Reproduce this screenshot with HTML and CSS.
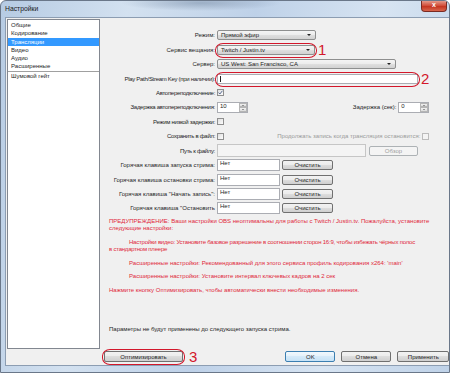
FILE: index.html
```html
<!DOCTYPE html>
<html lang="ru">
<head>
  <meta charset="UTF-8" />
  <meta name="viewport" content="width=device-width, initial-scale=1.0"/>
  <title>Настройки</title>
  <link rel="stylesheet" href="styles.css">
</head>
<body>

<div class="window">
  <div class="titlebar">
    <span class="title">Настройки</span>
    <div class="close">x</div>
  </div>

  <div class="frame">
    <div class="client">

      <!-- left category list -->
      <ul class="list">
        <li>Общие</li>
        <li>Кодирование</li>
        <li class="selected">Трансляции</li>
        <li>Видео</li>
        <li>Аудио</li>
        <li>Расширенные</li>
        <li class="sep">Шумовой гейт</li>
      </ul>

      <div class="main">
        <div class="form">
          <div class="row">
            <label>Режим:</label>
            <div class="select w-mode">Прямой эфир</div>
          </div>
          <div class="row">
            <label>Сервис вещания:</label>
            <div class="marked">
              <div class="select w-service">Twitch / Justin.tv</div>
              <span class="ring"></span>
            </div>
            <span class="num">1</span>
          </div>
          <div class="row">
            <label>Сервер:</label>
            <div class="select w-server">US West: San Francisco, CA</div>
          </div>
          <div class="row">
            <label class="tight">Play Path/Stream Key (при наличии):</label>
            <div class="marked">
              <div class="input w-key"><span class="caret"></span></div>
              <span class="ring"></span>
            </div>
            <span class="num">2</span>
          </div>
          <div class="row">
            <label class="tight">Автопереподключение:</label>
            <span class="check checked">
              <svg width="5" height="5" viewBox="0 0 5 5"><path d="M0.6 2.6 L1.9 4 L4.4 0.8" fill="none" stroke="#4a5f8a" stroke-width="0.9"/></svg>
            </span>
          </div>
          <div class="row">
            <label class="tight">Задержка автопереподключения:</label>
            <div class="spin"><span class="spin-val">10</span><span class="spin-btns"><i class="up"></i><i class="down"></i></span></div>
            <div class="right">
              <label class="sub">Задержка (сек):</label>
              <div class="spin"><span class="spin-val">0</span><span class="spin-btns"><i class="up"></i><i class="down"></i></span></div>
            </div>
          </div>
          <div class="row">
            <label class="tight">Режим низкой задержки:</label>
            <span class="check"></span>
          </div>
          <div class="row">
            <label class="tight">Сохранить в файл:</label>
            <span class="check"></span>
            <div class="right">
              <label class="sub disabled">Продолжать запись когда трансляция остановится:</label>
              <span class="check off"></span>
            </div>
          </div>
          <div class="row">
            <label class="tight">Путь к файлу:</label>
            <div class="input w-path off"></div>
            <button class="btn w-browse off">Обзор</button>
          </div>
          <div class="row">
            <label>Горячая клавиша запуска стрима:</label>
            <div class="input hotkey">Нет</div>
            <button class="btn w-clear">Очистить</button>
          </div>
          <div class="row">
            <label>Горячая клавиша остановки стрима:</label>
            <div class="input hotkey">Нет</div>
            <button class="btn w-clear">Очистить</button>
          </div>
          <div class="row">
            <label>Горячая клавиша "Начать запись":</label>
            <div class="input hotkey">Нет</div>
            <button class="btn w-clear">Очистить</button>
          </div>
          <div class="row">
            <label>Горячая клавиша "Остановить</label>
            <div class="input hotkey">Нет</div>
            <button class="btn w-clear">Очистить</button>
          </div>
        </div>

        <div class="notes">
          <p>ПРЕДУПРЕЖДЕНИЕ: Ваши настройки OBS неоптимальны для работы с Twitch / Justin.tv. Пожалуйста, установите<br>следующие настройки:</p>
          <p class="indent condensed">Настройки видео: Установите базовое разрешение в соотношении сторон 16:9, чтобы избежать чёрных полос<br>в стандартном плеере</p>
          <p class="indent">Расширенные настройки: Рекомендованный для этого сервиса профиль кодирования x264: 'main'</p>
          <p class="indent">Расширенные настройки: Установите интервал ключевых кадров на 2 сек</p>
          <p>Нажмите кнопку Оптимизировать, чтобы автоматически внести необходимые изменения.</p>
        </div>

        <div class="apply-note">Параметры не будут применены до следующего запуска стрима.</div>

        <div class="footer">
          <div class="marked">
            <button class="btn w-opt">Оптимизировать</button>
            <span class="ring"></span>
          </div>
          <span class="num">3</span>
          <div class="actions">
            <button class="btn default">OK</button>
            <button class="btn">Отмена</button>
            <button class="btn w-apply">Применить</button>
          </div>
        </div>
      </div>

    </div>
  </div>
</div>

</body>
</html>
```

FILE: styles.css
```css
body {
  margin: 0;
  font-family: "Liberation Sans", Arial, sans-serif;
  font-size: 6px;
  color: #1e1e1e;
  background: #fff;
}

.window {
  width: 450px;
  height: 373px;
  box-sizing: border-box;
  border: 1px solid #6a7789;
  border-radius: 6px 6px 0 0;
  background:
    radial-gradient(ellipse 80px 8px at 200px 2px, rgba(120,140,165,0.55), rgba(120,140,165,0) 100%),
    linear-gradient(100deg, #b6cbe3 0%, #d3e1f0 25%, #bed1e8 50%, #d7e4f2 75%, #bfd2e8 100%);
  display: flex;
  flex-direction: column;
  overflow: hidden;
}

.titlebar {
  height: 16px;
  display: flex;
  align-items: flex-start;
}
.title {
  padding: 4px 0 0 4px;
  font-size: 6.8px;
  color: #1a1a1a;
}
.close {
  margin: -1px 2px 0 auto;
  width: 26px;
  height: 12px;
  box-sizing: border-box;
  border: 1px solid #7a2a22;
  border-top: none;
  border-radius: 0 0 4px 4px;
  background: linear-gradient(#e9a99b, #d2503c 50%, #c22e1a 51%, #d8654c);
  color: #fff;
  font-size: 7px;
  font-weight: bold;
  text-align: center;
  line-height: 10px;
}

.frame {
  flex: 1;
  padding: 0 4px 6px 4px;
  display: flex;
}
.client {
  flex: 1;
  display: flex;
  background: #f0f0f0;
  border: 1px solid #8c9db2;
}

/* category list */
.list {
  list-style: none;
  margin: 1px 0 0 1px;
  padding: 1px 0 0 0;
  width: 93px;
  height: 330px;
  box-sizing: border-box;
  background: #fff;
  border: 1px solid #828790;
}
.list li {
  height: 8.3px;
  line-height: 8.3px;
  padding-left: 3px;
}
.list li.selected {
  background: #3399ff;
  color: #fff;
}
.list li.sep {
  border-top: 1px solid #a0a0a0;
}

.main {
  flex: 1;
  min-width: 0;
  display: flex;
  flex-direction: column;
}

.form {
  padding-top: 10px;
}
.row {
  height: 14.45px;
  display: flex;
  align-items: center;
  padding-right: 25px;
}
.row > label {
  width: 115px;
  flex-shrink: 0;
  text-align: right;
  white-space: nowrap;
  margin-right: 2px;
}
.row > label.tight {
  letter-spacing: -0.3px;
}
.row .right {
  margin-left: auto;
  display: flex;
  align-items: center;
}
.sub {
  margin-right: 2px;
  white-space: nowrap;
}
.disabled {
  color: #9a9a9a;
}

.select {
  position: relative;
  height: 10px;
  box-sizing: border-box;
  padding-left: 3px;
  line-height: 8px;
  border: 1px solid #8e8f8f;
  border-radius: 2px;
  background: linear-gradient(#f4f4f4, #ececec 50%, #dfdfdf 50%, #d2d2d2);
  flex-shrink: 0;
}
.select::after {
  content: "";
  position: absolute;
  right: 4px;
  top: 3px;
  border-left: 2px solid transparent;
  border-right: 2px solid transparent;
  border-top: 2px solid #222;
}
.w-mode { width: 99px; }
.w-service { width: 98px; }
.w-server { width: 179px; }

.input {
  height: 10px;
  box-sizing: border-box;
  border: 1px solid #abadb3;
  background: #fff;
  padding-left: 2px;
  line-height: 8px;
  flex-shrink: 0;
}
.input.off {
  background: #f4f4f4;
  border-color: #c6c6c6;
}
.w-key { width: 201px; }
.w-path { width: 149px; height: 13px; }
.caret {
  display: inline-block;
  width: 1px;
  height: 6px;
  background: #222;
  margin-top: 1px;
}
.hotkey {
  width: 63px;
  height: 12px;
  line-height: 7px;
}

.marked {
  position: relative;
  display: flex;
  flex-shrink: 0;
}
.ring {
  position: absolute;
  left: -2px;
  right: -2px;
  top: -2px;
  bottom: -3px;
  border: 1.3px solid #d3172b;
  border-radius: 8px / 7px;
}
.num {
  color: #d3172b;
  font-size: 15px;
  line-height: 12px;
  margin-left: 3px;
  flex-shrink: 0;
}

.check {
  width: 7px;
  height: 7px;
  box-sizing: border-box;
  border: 1px solid #8f8f8f;
  background: linear-gradient(135deg, #dedede, #fdfdfd);
  display: flex;
  align-items: center;
  justify-content: center;
  flex-shrink: 0;
}
.check.off {
  border-color: #bcbcbc;
  background: #f4f4f4;
}

.spin {
  width: 31px;
  height: 11px;
  box-sizing: border-box;
  border: 1px solid #abadb3;
  background: #fff;
  display: flex;
  flex-shrink: 0;
}
.spin-val {
  flex: 1;
  padding-left: 2px;
  line-height: 7px;
}
.spin-btns {
  width: 8px;
  display: flex;
  flex-direction: column;
}
.spin-btns i {
  flex: 1;
  position: relative;
  background: linear-gradient(#f2f2f2, #dcdcdc);
  border: 0.5px solid #b5b5b5;
}
.spin-btns i::after {
  content: "";
  position: absolute;
  left: 2px;
  top: 1px;
  border-left: 1.5px solid transparent;
  border-right: 1.5px solid transparent;
}
.spin-btns .up::after { border-bottom: 1.5px solid #444; }
.spin-btns .down::after { border-top: 1.5px solid #444; }

.btn {
  height: 10px;
  box-sizing: border-box;
  padding: 0;
  font-family: inherit;
  font-size: 6px;
  line-height: 8px;
  color: #1e1e1e;
  border: 1px solid #707070;
  border-radius: 2px;
  background: linear-gradient(#f2f2f2, #ebebeb 50%, #dddddd 50%, #cfcfcf);
  flex-shrink: 0;
}
.btn.off {
  color: #a0a0a0;
  border-color: #adb2b5;
  background: #f4f4f4;
}
.w-browse { width: 49px; margin-left: 3px; }
.w-clear { width: 51px; margin-left: 2px; }

.notes {
  margin-top: 2px;
  padding: 0 0 0 9px;
  color: #e0283a;
  line-height: 7.5px;
  white-space: nowrap;
}
.notes p {
  margin: 0 0 6px 0;
}
.notes .indent {
  text-indent: 20px;
}
.notes .condensed {
  letter-spacing: -0.22px;
}

.apply-note {
  margin-top: auto;
  padding-left: 9px;
  line-height: 8px;
}

.footer {
  display: flex;
  align-items: center;
  height: 11px;
  margin: 18px 0 3px 0;
}
.footer .marked {
  margin-left: 4px;
}
.w-opt { width: 79px; height: 11px; }
.footer .num {
  margin-left: 6px;
}
.actions {
  margin-left: auto;
  margin-right: 5px;
  display: flex;
  gap: 6px;
}
.actions .btn {
  width: 50px;
  height: 11px;
}
.actions .w-apply { width: 52px; }
.btn.default {
  border-color: #3c7fb1;
  background: linear-gradient(#f1f8fd, #e3f1fb 50%, #d5eaf9 50%, #c6e2f6);
}
```
